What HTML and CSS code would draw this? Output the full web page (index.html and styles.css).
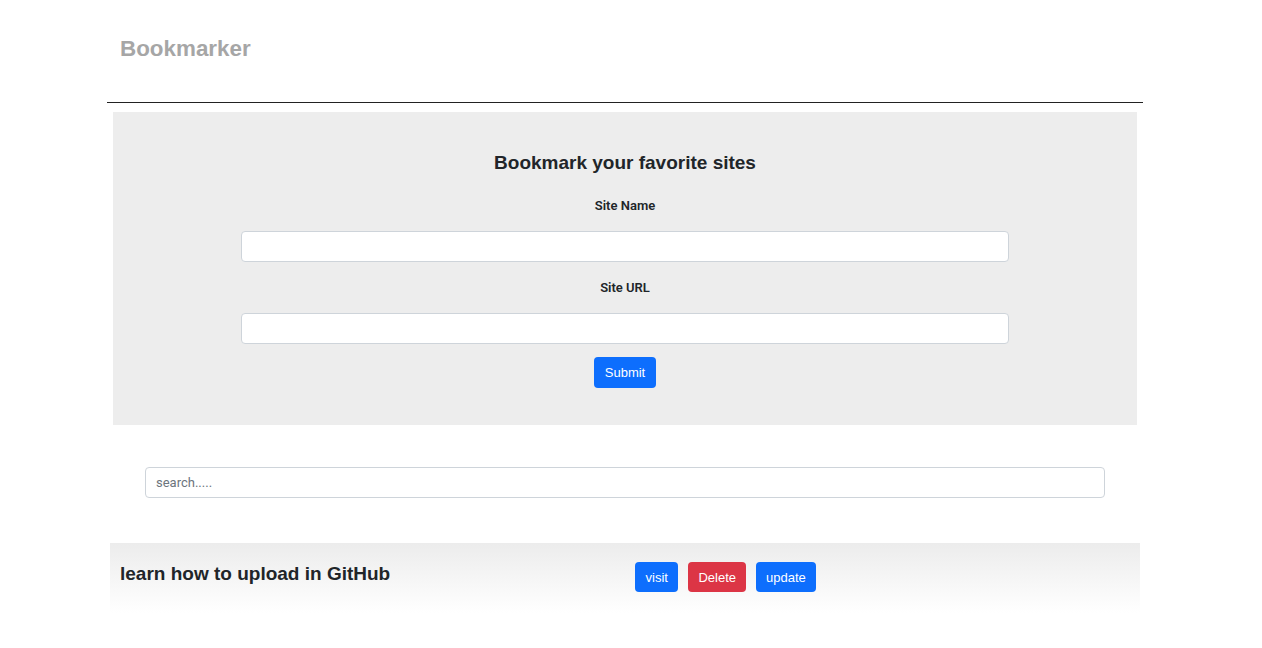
FILE: index.html
```html
<!DOCTYPE html>
<html>
<head>
<meta charset="utf-8">
<title>Bookmarker</title>
<link rel="stylesheet" href="styles.css">
</head>
<body>
<div class="page">
  <header class="brand">Bookmarker</header>
  <hr class="rule">
  <section class="panel">
    <h2 class="panel-title">Bookmark your favorite sites</h2>
    <label class="field-label" for="siteName">Site Name</label>
    <input class="field" id="siteName" type="text">
    <label class="field-label field-label--second" for="siteUrl">Site URL</label>
    <input class="field" id="siteUrl" type="text">
    <button class="btn btn-primary btn-submit" type="button">Submit</button>
  </section>
  <div class="search-wrap">
    <input class="search" type="text" placeholder="search.....">
  </div>
  <div class="bookmark">
    <div class="bookmark-col">
      <h3 class="bookmark-title">learn how to upload in GitHub</h3>
    </div>
    <div class="bookmark-col bookmark-actions">
      <button class="btn btn-primary btn-visit" type="button">visit</button>
      <button class="btn btn-danger" type="button">Delete</button>
      <button class="btn btn-primary" type="button">update</button>
    </div>
  </div>
</div>
</body>
</html>
```
FILE: styles.css
```css
* { box-sizing: border-box; }
html, body { margin: 0; padding: 0; background: #fff; }
body {
  font-family: "Liberation Sans", Arial, sans-serif;
  color: #212529;
}
.page {
  width: 1036px;
  margin-left: 107px;
}
.brand {
  padding: 35px 0 0 13px;
  height: 64px;
  font-size: 22.4px;
  line-height: 28px;
  font-weight: bold;
  color: #a6a6a6;
}
.rule {
  margin: 38px 0 0 0;
  border: 0;
  border-top: 1px solid #222;
  height: 0;
}
.panel {
  margin: 9px 6px 0 6px;
  background: #ededed;
  padding: 39px 0 37px 0;
  display: flex;
  flex-direction: column;
  align-items: center;
}
.panel-title {
  margin: 0;
  font-size: 19px;
  line-height: 24px;
  font-weight: bold;
  color: #212529;
}
.field-label {
  margin-top: 23px;
  font-family: Roboto, "Liberation Sans", sans-serif;
  font-size: 13px;
  line-height: 16px;
  font-weight: 600;
  color: #212529;
}
.field-label--second { margin-top: 18px; }
.field {
  margin-top: 17px;
  width: 768px;
  height: 31px;
  border: 1px solid #ced4da;
  border-radius: 4px;
  background: #fff;
  padding: 0 10px;
  font-size: 13px;
}
.btn {
  height: 31px;
  padding: 0 10px;
  border: 0;
  border-radius: 4px;
  font-family: "Liberation Sans", Arial, sans-serif;
  font-size: 13px;
  color: #fff;
  cursor: pointer;
}
.btn-primary { background: #0d6efd; }
.btn-danger { background: #dc3545; }
.btn-submit { margin-top: 13px; padding: 0 11px; }
.btn-visit { padding: 0 10.5px; }
.search-wrap {
  padding: 42px 38px 0 38px;
}
.search {
  display: block;
  width: 100%;
  height: 31px;
  border: 1px solid #ced4da;
  border-radius: 4px;
  padding: 0 10px;
  font-family: Roboto, "Liberation Sans", sans-serif;
  font-size: 13px;
  color: #212529;
}
.search::placeholder { color: #6c757d; }
.bookmark {
  margin: 45px 3px 0 3px;
  height: 70px;
  padding-top: 19px;
  display: flex;
  background: linear-gradient(to bottom, #ececec 0%, #ffffff 100%);
}
.bookmark-col {
  flex: 1 1 50%;
  padding: 0 10px;
}
.bookmark-title {
  margin: 0;
  font-size: 19px;
  line-height: 24px;
  font-weight: bold;
  color: #212529;
}
.bookmark-actions {
  display: flex;
  gap: 10px;
  align-items: flex-start;
}
.bookmark-actions .btn { height: 30px; }
```
